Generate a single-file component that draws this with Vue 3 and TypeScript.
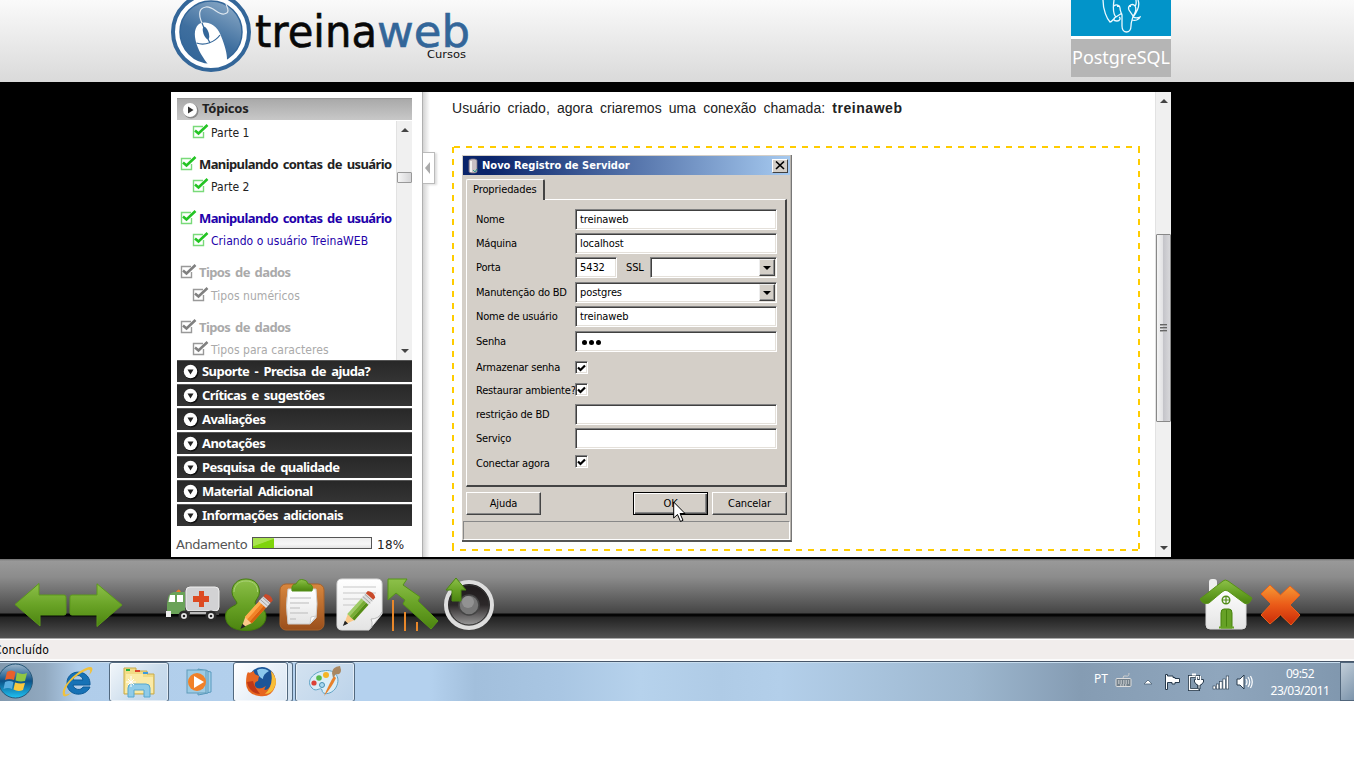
<script setup lang="ts">
interface Topic { label: string; kind: 'head' | 'sub'; state: 'done' | 'current' | 'todo'; h: number }

const topics: Topic[] = [
  { label: 'Parte 1', kind: 'sub', state: 'done', h: 32 },
  { label: 'Manipulando contas de usuário', kind: 'head', state: 'done', h: 22 },
  { label: 'Parte 2', kind: 'sub', state: 'done', h: 32 },
  { label: 'Manipulando contas de usuário', kind: 'head', state: 'current', h: 22 },
  { label: 'Criando o usuário TreinaWEB', kind: 'sub', state: 'current', h: 32 },
  { label: 'Tipos de dados', kind: 'head', state: 'todo', h: 23 },
  { label: 'Tipos numéricos', kind: 'sub', state: 'todo', h: 32 },
  { label: 'Tipos de dados', kind: 'head', state: 'todo', h: 22 },
  { label: 'Tipos para caracteres', kind: 'sub', state: 'todo', h: 30 },
]

const sections: string[] = [
  'Suporte - Precisa de ajuda?',
  'Críticas e sugestões',
  'Avaliações',
  'Anotações',
  'Pesquisa de qualidade',
  'Material Adicional',
  'Informações adicionais',
]

interface Field { label: string; type: 'text' | 'port' | 'select' | 'check' | 'password'; value?: string; h: number }

const fields: Field[] = [
  { label: 'Nome', type: 'text', value: 'treinaweb', h: 24 },
  { label: 'Máquina', type: 'text', value: 'localhost', h: 24 },
  { label: 'Porta', type: 'port', value: '5432', h: 25 },
  { label: 'Manutenção do BD', type: 'select', value: 'postgres', h: 24 },
  { label: 'Nome de usuário', type: 'text', value: 'treinaweb', h: 25 },
  { label: 'Senha', type: 'password', h: 26 },
  { label: 'Armazenar senha', type: 'check', h: 23 },
  { label: 'Restaurar ambiente?', type: 'check', h: 24 },
  { label: 'restrição de BD', type: 'text', h: 24 },
  { label: 'Serviço', type: 'text', h: 24 },
  { label: 'Conectar agora', type: 'check', h: 24 },
]

const progress = 18
</script>

<template>
  <div class="screen">
    <header class="top">
      <svg class="logo" width="300" height="82" viewBox="0 0 300 82">
        <defs>
          <linearGradient id="disc" x1="0.8" y1="0" x2="0.3" y2="1">
            <stop offset="0" stop-color="#8aa9c6" /><stop offset="0.6" stop-color="#3f6f9f" /><stop offset="1" stop-color="#336699" />
          </linearGradient>
        </defs>
        <circle cx="40" cy="32" r="38" fill="#fff" stroke="#336699" stroke-width="4" />
        <circle cx="40" cy="32" r="31" fill="url(#disc)" stroke="#336699" stroke-width="1.5" />
        <path d="M31 23C27 14 28 8 35 7S47 15 53 14S57 9 55 4" fill="none" stroke="#dfe8f0" stroke-width="1.2" />
        <path d="M24 37C23 28 27 22 34 22.500C43 23 48 30 50 36C54 46 56 53 56 60C53 64 49 66 44 67C40 67 37 65 36 63C30 55 25 46 24 37Z" fill="#fff" />
        <path d="M25.500 43C34 46 44 42 49 35M39 43L36.500 38M31 23L33 28" fill="none" stroke="#336699" stroke-width="1.200" />
        <ellipse cx="35" cy="33" rx="2.600" ry="6.500" transform="rotate(-20 35 33)" fill="#336699" />
        <text x="84" y="46.500" class="brand" textLength="122" lengthAdjust="spacingAndGlyphs">treina</text>
        <text x="206" y="46.500" class="brand blue" textLength="93" lengthAdjust="spacingAndGlyphs">web</text>
        <text x="256" y="58" class="brand-sub" textLength="39" lengthAdjust="spacingAndGlyphs">Cursos</text>
      </svg>
      <div class="course">
        <div class="course-pic">
          <svg width="100" height="36" viewBox="0 0 100 36" fill="none" stroke="#eefaff" stroke-width="1.3">
            <path d="M32 0C32 10 36 19 39 22C41 22 42 19 44 18M43 0C42 7 42 14 45 17L51 13M43 6C45 4 49 5 49 8S50 12 51 15V26C51 34 60 34 60 26C60 21 62 18 62 16L58 10C56 5 62 3 64 6C66 9 64 14 62 16M64 6C66 4 65 2 65 0M67 0C69 5 66 12 62 17C64 18 67 18 69 17C68 20 64 21 61 20M45 17C42 18 42 21 46 21C49 21 50 18 48 17" />
            <path d="M46 6h2M58 6h2" stroke-width="2" />
          </svg>
        </div>
        <div class="course-name">PostgreSQL</div>
      </div>
    </header>

    <div class="stage">
      <div class="book">
        <aside class="side">
          <div class="side-head">
            <svg width="17" height="17" viewBox="0 0 17 17"><circle cx="9" cy="9" r="7.500" fill="#666" opacity=".6" /><circle cx="8" cy="8" r="7" fill="#fff" /><path d="M6 4.500L11.500 8L6 11.500Z" fill="#333" /></svg>
            <span>Tópicos</span>
          </div>
          <div class="tree">
            <ul class="topics">
              <li v-for="(t, i) in topics" :key="i" :class="[t.kind, t.state]" :style="{ height: t.h + 'px' }">
                <svg class="tick" width="17" height="15" viewBox="0 0 17 15">
                  <path d="M11 2.500H1.500V13.500H11.500V8" fill="none" class="tick-box" />
                  <path d="M3 6.500L6.500 9.500L15.500 1" fill="none" class="tick-mark" />
                </svg>
                <span>{{ t.label }}</span>
              </li>
            </ul>
            <div class="bar mini">
              <i class="tri up"></i>
              <div class="mini-thumb"></div>
              <i class="tri down"></i>
            </div>
          </div>
          <ul class="sections">
            <li v-for="s in sections" :key="s">
              <svg width="16" height="16" viewBox="0 0 16 16"><circle cx="8.500" cy="8.500" r="7" fill="#111" /><circle cx="7.500" cy="7.500" r="6.700" fill="#fff" /><path d="M4.500 5.500H10.500L7.500 10.500Z" fill="#222" /></svg>
              <span>{{ s }}</span>
            </li>
          </ul>
          <div class="progress">
            <span class="p-label">Andamento</span>
            <div class="meter"><div class="fill" :style="{ width: progress + '%' }"></div></div>
            <span class="p-value">{{ progress }}%</span>
          </div>
        </aside>

        <div class="gutter">
          <div class="handle"><i></i></div>
        </div>

        <main class="lesson">
          <p>Usuário criado, agora criaremos uma conexão chamada: <b>treinaweb</b></p>
          <div class="frame">
            <section class="dialog">
              <div class="titlebar">
                <svg width="14" height="16" viewBox="0 0 14 16"><path d="M3 2.500C3 .5 11 .5 11 2.500V13.500C11 15.500 3 15.500 3 13.500Z" fill="#c9bfc4" stroke="#7d7686" stroke-width=".8" /><path d="M5 3V14" stroke="#fff" stroke-width="1.500" /><path d="M7 12L9 14L11 11" stroke="#2a9a8a" fill="none" /></svg>
                <span>Novo Registro de Servidor</span>
                <div class="close"><svg width="10" height="9" viewBox="0 0 10 9"><path d="M1 .5L9 8M9 .5L1 8" stroke="#000" stroke-width="1.600" /></svg></div>
              </div>
              <div class="tab">Propriedades</div>
              <div class="sheet">
                <div v-for="f in fields" :key="f.label" class="row" :class="f.type" :style="{ height: f.h + 'px' }">
                  <label>{{ f.label }}</label>
                  <template v-if="f.type === 'check'">
                    <div class="box"><svg width="9" height="9" viewBox="0 0 9 9"><path d="M1 3.500L3.500 6L8 1.500" fill="none" stroke="#000" stroke-width="2.200" /></svg></div>
                  </template>
                  <template v-else-if="f.type === 'port'">
                    <div class="input short">{{ f.value }}</div>
                    <span class="ssl">SSL</span>
                    <div class="input combo"><span></span><b class="drop"><i></i></b></div>
                  </template>
                  <div v-else-if="f.type === 'select'" class="input"><span>{{ f.value }}</span><b class="drop"><i></i></b></div>
                  <div v-else-if="f.type === 'password'" class="input dots"><i></i><i></i><i></i></div>
                  <div v-else class="input">{{ f.value }}</div>
                </div>
              </div>
              <div class="buttons">
                <div class="btn">Ajuda</div>
                <div class="btn ok">OK</div>
                <div class="btn">Cancelar</div>
                <svg class="cursor" width="13" height="22" viewBox="0 0 13 22"><path d="M.7 1V17L4.500 13.500L7.500 20.500L10 19.300L7 12.500H12Z" fill="#fff" stroke="#000" stroke-width="1" /></svg>
              </div>
              <div class="status-cell"></div>
            </section>
          </div>
        </main>

        <div class="bar main-bar">
          <i class="tri up"></i>
          <div class="thumb"><i></i><i></i><i></i></div>
          <i class="tri down"></i>
        </div>
      </div>
    </div>

    <nav class="tools">
      <svg width="0" height="0" class="defs">
        <defs>
          <linearGradient id="leaf" x1="0" y1="0" x2="0" y2="1"><stop offset="0" stop-color="#8dc04a" /><stop offset=".5" stop-color="#69a326" /><stop offset="1" stop-color="#4c8410" /></linearGradient>
          <linearGradient id="wood" x1="0" y1="0" x2="0" y2="1"><stop offset="0" stop-color="#d8873e" /><stop offset="1" stop-color="#9a4f1c" /></linearGradient>
          <linearGradient id="fire" x1="0" y1="0" x2="0" y2="1"><stop offset="0" stop-color="#f79a35" /><stop offset=".5" stop-color="#ea5a18" /><stop offset="1" stop-color="#c92a08" /></linearGradient>
          <linearGradient id="paper" x1="0" y1="0" x2="0" y2="1"><stop offset="0" stop-color="#fff" /><stop offset="1" stop-color="#e4e4e4" /></linearGradient>
          <linearGradient id="coal" x1="0" y1="0" x2="0" y2="1"><stop offset="0" stop-color="#1c1819" /><stop offset=".5" stop-color="#2c2829" /><stop offset="1" stop-color="#aaa" /></linearGradient>
          <g id="pencil">
            <path d="M-4.500 -15H4.500V8L0 19L-4.500 8Z" fill="#fbc98a" />
            <path d="M-4.800 -14H-1.600V8.500H-4.800Z" fill="var(--lite)" /><path d="M-1.600 -14H1.600V8.500H-1.600Z" fill="var(--mid)" /><path d="M1.600 -14H4.800V8.500H1.600Z" fill="var(--deep)" />
            <path d="M-1.400 15.500L0 19L1.400 15.500Z" fill="#222" stroke="#222" />
            <path d="M-5 -19.500H5V-12.500H-5Z" fill="#ddd" /><path d="M-5 -18H5M-5 -15H5" stroke="#999" stroke-width=".8" />
            <path d="M-5 -19.500V-22.500Q0 -26 5 -22.500V-19.500Z" fill="#c94a2a" />
          </g>
        </defs>
      </svg>
      <svg class="t-back" width="54" height="46" viewBox="0 0 54 46"><path d="M1 22.500L25 1.500V13H50Q52 13 52 15V31Q52 33 50 33H26V44Z" fill="url(#leaf)" stroke="#5c9a1b" /></svg>
      <svg class="t-next" width="54" height="46" viewBox="0 0 54 46"><path d="M53 22L28 .8V12H3Q1 12 1 14V30Q1 32 3 32H28V43.500Z" fill="url(#leaf)" stroke="#5c9a1b" /></svg>
      <svg class="t-help" width="54" height="36" viewBox="0 0 54 36">
        <rect x="20" y="1" width="33" height="24" rx="4" fill="#d2d2d4" stroke="#eee" />
        <path d="M2 12Q3 7 8 6H19V28H1V18Z" fill="#6aa258" /><path d="M4 9H9V16H2.500ZM11 9H17V16H11Z" fill="#fff" /><path d="M10 6Q13 1 15 6Z" fill="#ee7a28" />
        <path d="M0 25H5V31H0Z" fill="#eee" /><path d="M20 25H53V29H20Z" fill="#444" /><path d="M24 27H40" stroke="#bbb" stroke-width="2" />
        <path d="M33 5H38V10H43V16H38V21H33V16H27V10H33Z" fill="#dd4a21" />
        <g fill="#999" stroke="#2a2a2a" stroke-width="2.500"><circle cx="18" cy="30" r="4.300" /><circle cx="45" cy="30" r="4.300" /></g>
        <g fill="#222" stroke="#eee" stroke-width="1.300"><circle cx="18" cy="30" r="2" /><circle cx="45" cy="30" r="2" /></g>
      </svg>
      <svg class="t-user" width="50" height="54" viewBox="0 0 50 54">
        <path d="M21 1C30 1 34.500 7 34.500 14C34.500 19 30 22 30 25C30 28 41 29 41 38C41 48 32 52.500 21 52.500C9 52.500 .5 48 .5 38C.5 29 12 28 12 25C11 22 7 19 7 14C7 7 12 1 21 1Z" fill="url(#leaf)" stroke="#427b0d" />
        <path d="M9 14C9 8 13 3 21 3S33 8 32.500 14" fill="none" stroke="#a8d074" />
        <use href="#pencil" class="orange" transform="translate(29 36) rotate(42)" />
      </svg>
      <svg class="t-clip" width="46" height="54" viewBox="0 0 46 54">
        <rect x="1" y="6" width="44" height="46" rx="6" fill="url(#wood)" stroke="#a96228" />
        <path d="M9 11H37Q39 26 37 40L31 46H9Q6 28 9 11Z" fill="url(#paper)" stroke="#ccc" /><path d="M31 46L32 39L37 38Z" fill="#fff" stroke="#ccc" />
        <path d="M11 20H32M11 25H30M11 30H21M11 35H29M11 41H17" stroke="#bbb" />
        <path d="M13 13Q12 6 17 6Q20 0 25 2Q28 2 29 6Q35 6 33 13Z" fill="url(#leaf)" stroke="#529016" />
      </svg>
      <svg class="t-note" width="48" height="54" viewBox="0 0 48 54">
        <path d="M6 1H41Q46 1 46 6V36L33 52H6Q1 52 1 47V6Q1 1 6 1Z" fill="url(#paper)" stroke="#ddd" />
        <path d="M33 52Q38 48 35 41Q43 41 46 34" fill="#f5f5f5" stroke="#bbb" />
        <path d="M7 9H40M7 15H40M7 21H26M7 27H24" stroke="#c7c7c7" />
        <use href="#pencil" class="green" transform="translate(20.500 33) rotate(42)" />
      </svg>
      <svg class="t-chart" width="52" height="54" viewBox="0 0 52 54">
        <path d="M6 22V53M18 34V53M30 44V53" stroke="#e8872a" stroke-width="2" />
        <path d="M1 1H20L16 7L33 19L31 23L51 43L44 51L16 26L18 22L9 15L1 22Z" fill="url(#leaf)" stroke="#559418" />
      </svg>
      <svg class="t-sound" width="52" height="54" viewBox="0 0 52 54">
        <circle cx="26" cy="28" r="23" fill="url(#coal)" stroke="#dedede" stroke-width="4" /><circle cx="26" cy="28" r="20" fill="none" stroke="#333" />
        <circle cx="26" cy="28" r="10" fill="#777" stroke="#444" stroke-width="1.500" /><circle cx="25" cy="25" r="6" fill="#929292" />
        <path d="M13 1L23 13H18V24H9V13H3Z" fill="url(#leaf)" stroke="#4b8712" />
      </svg>
      <svg class="t-home" width="54" height="54" viewBox="0 0 54 54">
        <rect x="10" y="1" width="8" height="20" rx="3" fill="#eee" />
        <path d="M7 24L27 9L47 24V47Q47 51 43 51H11Q7 51 7 47Z" fill="url(#paper)" stroke="#ddd" />
        <path d="M1 21L24 3Q26 1 29 3L53 20Q50 28 45 25L29 13Q26 11 23 14L10 25Q4 27 1 21Z" fill="url(#leaf)" stroke="#589316" />
        <circle cx="27" cy="22" r="3.800" fill="none" stroke="#508c17" stroke-width="1.400" /><path d="M23 22H31M27 18V26" stroke="#508c17" stroke-width="1.200" />
        <path d="M22 50V35Q22 31 25 31H30Q33 31 33 35V50Z" fill="#66a126" stroke="#46820d" /><path d="M27.500 32V49" stroke="#46820d" /><path d="M20 49.500H35" stroke="#65a323" stroke-width="2" />
      </svg>
      <svg class="t-exit" width="41" height="42" viewBox="0 0 41 42"><path d="M10 1L20.500 11L30 2L40 11L30 21L40 31L31 41L20.500 31L10 40L1 31L11 20L1 10Z" fill="url(#fire)" stroke="#e9601b" stroke-linejoin="round" /></svg>
    </nav>

    <div class="statusbar"><span>Concluído</span></div>

    <footer class="taskbar">
      <div class="start">
        <svg width="36" height="38" viewBox="0 0 36 38">
          <defs><linearGradient id="orb" x1="0" y1="0" x2="0" y2="1"><stop offset="0" stop-color="#9fb7cb" /><stop offset=".5" stop-color="#0c5288" /><stop offset="1" stop-color="#1fc3f3" /></linearGradient></defs>
          <circle cx="15.500" cy="19" r="17" fill="url(#orb)" stroke="#275879" />
          <path d="M7 10Q11 7 15.500 10L14 18Q9 16 5 18Z" fill="#e8602c" /><path d="M17 10.500Q22 13 27 11L25 19Q20 20 15.500 18.500Z" fill="#8fc643" />
          <path d="M5 20Q9 18 13.500 20L12 27Q8 25 3.500 27Z" fill="#58acdf" /><path d="M15 20.500Q20 22 25 21L23 28Q18 30 13.500 27.500Z" fill="#fac83c" />
        </svg>
      </div>
      <div class="app ie">
        <svg width="32" height="32" viewBox="0 0 32 32">
          <path d="M28 19H11C12 24 19 25 21 21H28C24 31 6 31 5 18C4 2 29 2 28 19ZM11 14H21C20 8 12 8 11 14Z" fill="#1772b6" stroke="#0d5b98" fill-rule="evenodd" />
          <path d="M1 29C-2 20 18 2 28 1C33 1 29 8 27 9C29 5 29 2 23 5C12 10 2 21 3 27C3 30 7 28 10 26C6 30 2 32 1 29Z" fill="#f1c13b" />
        </svg>
      </div>
      <div class="app lit folder">
        <svg width="34" height="32" viewBox="0 0 34 32">
          <path d="M2 7V2H14V5H25V8H32V28H2Z" fill="#f2dc85" stroke="#c8aa4a" /><path d="M4 8H21V11H31V27H3Z" fill="#faeaa7" />
          <path d="M4 4H8" stroke="#22b33d" stroke-width="2" /><path d="M13 5H18" stroke="#d9452c" stroke-width="2" /><path d="M21 7H26" stroke="#3e9bdc" stroke-width="2" />
          <path d="M6 31V22Q6 18 10 18H24Q28 18 28 22V31H22V24H12V31Z" fill="#8fcbe8" stroke="#57a7cf" /><path d="M9 10V21M4 16H14M6 13L12 19M12 13L6 19" stroke="#fff" />
        </svg>
      </div>
      <div class="app wmp">
        <svg width="30" height="28" viewBox="0 0 30 28">
          <path d="M15 2L25 4V24L15 26Z" fill="#a4d0e7" stroke="#5799bd" /><path d="M12 1L22 3V25L12 27Z" fill="#a4d0e7" stroke="#5799bd" /><rect x="1" y="2" width="19" height="23" fill="#9ccbe4" stroke="#619bb9" />
          <circle cx="11" cy="14" r="9" fill="#f18129" /><path d="M8 8L18 14L8 20Z" fill="#fff" />
        </svg>
      </div>
      <div class="app lit firefox">
        <svg width="32" height="32" viewBox="0 0 32 32">
          <circle cx="17" cy="14" r="13" fill="#1b5598" /><path d="M12 4Q18 1 24 5Q18 8 18 13Q13 11 12 4Z" fill="#8bc9ed" />
          <path d="M3 6Q4 8 9 5Q8 8 14 10L13 15Q9 16 10 20Q13 25 21 20Q17 26 23 23Q29 17 26 5Q33 12 30 21Q26 32 14 30Q1 28 1 17Q1 9 3 6Z" fill="#e66521" /><path d="M26 5Q33 13 30 20Q27 28 20 28Q29 20 26 5Z" fill="#f8bf38" /><path d="M2 16Q4 27 15 28Q9 21 8 15Z" fill="#bf3816" />
        </svg>
      </div>
      <div class="stack"></div>
      <div class="app lit paint">
        <svg width="34" height="34" viewBox="0 0 34 34">
          <path d="M15 6C28 3 34 14 27 24C22 30 14 30 14 25C13 21 8 28 4 23C-3 16 6 7 15 6Z" fill="#d9edf7" stroke="#5fa3c6" />
          <circle cx="6" cy="18" r="2.600" fill="#dc4136" /><circle cx="11" cy="13" r="2.800" fill="#59b94b" /><circle cx="18" cy="10" r="3" fill="#f5b527" /><circle cx="14" cy="20" r="2.500" fill="#a8d8ef" stroke="#478eb1" />
          <path d="M16 31Q22 17 26 11L28 13Q24 22 16 31Z" fill="#e8812b" /><path d="M24 8Q24 2 32 1L33 5Q33 10 28 9L25 13Z" fill="#a98761" />
        </svg>
      </div>
      <div class="tray">
        <span class="lang">PT</span>
        <svg class="kbd" width="17" height="14" viewBox="0 0 17 14"><rect x="1" y="5.500" width="15" height="8" rx="1" fill="#74818b" stroke="#ddd" /><path d="M3 8H14M3 10H14M5 12H12" stroke="#eee" stroke-dasharray="1.500 1" /><path d="M8 5Q8 2 11 3T14 0" stroke="#ccc" fill="none" /></svg>
        <svg class="caret" width="10" height="6" viewBox="0 0 10 6"><path d="M1 5L5 1L9 5Z" fill="#fff" stroke="#4c6276" stroke-width=".8" /></svg>
        <svg class="flag" width="18" height="18" viewBox="0 0 18 18"><path d="M1.500 1.500V16.500H3.500V9.500H8V11H11V9.500H15.500V5.500H11V4.500H9V3H3.500V1.500Z" fill="#fff" stroke="#273a4c" /></svg>
        <svg class="plug" width="16" height="18" viewBox="0 0 16 18"><rect x="1.500" y="3.500" width="9" height="13" fill="#8399ae" stroke="#273a4c" stroke-width="3" /><rect x="1.500" y="3.500" width="9" height="13" fill="none" stroke="#fff" stroke-width="1.300" /><path d="M4 1.500H8" stroke="#fff" stroke-width="2" /><path d="M6.500 6.500H15.500V9L13 12H12V16H10V12H9L6.500 9ZM8 3V6M13 3V6" fill="#fff" stroke="#273a4c" /><path d="M8.500 3V7M12.500 3V7" stroke="#fff" stroke-width="1.400" /></svg>
        <svg class="net" width="18" height="15" viewBox="0 0 18 15"><g fill="#fff" stroke="#273a4c" stroke-width=".6"><rect x="1" y="11" width="2.500" height="3" /><rect x="4.300" y="9" width="2.500" height="5" /><rect x="7.600" y="6.500" width="2.500" height="7.500" /><rect x="10.900" y="4" width="2.500" height="10" /><rect x="14.200" y="1" width="2.500" height="13" /></g></svg>
        <svg class="vol" width="18" height="16" viewBox="0 0 18 16"><path d="M1 5H4L8 1V15L4 11H1Z" fill="#fff" stroke="#273a4c" /><path d="M10 5Q12 8 10 11M12 3Q15.500 8 12 13M14.500 2Q18 8 14.500 14" fill="none" stroke="#fff" stroke-width="1.200" /></svg>
        <div class="clock"><span>09:52</span><span>23/03/2011</span></div>
      </div>
      <div class="peek"></div>
    </footer>
  </div>
</template>

<style>
html, body { margin: 0; background: #fff; overflow: hidden; }
</style>

<style scoped>
* { box-sizing: border-box; }
ul, p { margin: 0; padding: 0; list-style: none; }
svg { display: block; flex: none; }
.screen { width: 1354px; height: 701px; overflow: hidden; background: #000; font-family: "DejaVu Sans Condensed", "DejaVu Sans", sans-serif; font-size: 12px; color: #222; }

.top { height: 82px; background: linear-gradient(#fafafa, #ddd 90%, #dadada); display: flex; padding-left: 171px; }
.brand { font: 45px "DejaVu Sans", sans-serif; fill: #080808; stroke: #080808; stroke-width: .6; }
.brand.blue { fill: #336699; stroke: #336699; }
.brand-sub { font: 10px "DejaVu Sans", sans-serif; fill: #111; }
.course { width: 100px; margin-left: 600px; }
.course-pic { height: 39px; background: #0294c9; border-bottom: 3px solid #fff; }
.course-name { height: 38px; background: #b5b5b5; color: #fff; font: 18px/37px "Noto Sans", sans-serif; letter-spacing: -.08px; text-align: center; white-space: nowrap; }

.stage { height: 477px; padding: 10px 0 0 171px; }
.book { width: 1000px; height: 465px; background: #fff; display: flex; }
.side { width: 251px; padding: 6px 0 0 6px; }
.side-head { width: 235px; height: 22px; border-top: 1px solid #999; background: linear-gradient(#a9a9a9, #c8c8c8); display: flex; align-items: center; padding-left: 5px; gap: 3px; font: bold 13px/19px "Noto Sans", sans-serif; letter-spacing: -.25px; color: #222; }
.side-head svg { margin-top: 2px; }
.side-head span { margin-top: -2px; }
.tree { width: 235px; height: 240px; display: flex; overflow: hidden; padding-top: 1px; }
.topics { width: 220px; overflow: hidden; }
.topics li { display: flex; align-items: flex-start; white-space: nowrap; line-height: 22px; }
.topics .head { padding-left: 3px; gap: 2px; font: bold 13px/22px "Noto Sans", sans-serif; letter-spacing: -.6px; word-spacing: 2px; }
.topics .sub { padding-left: 15px; gap: 2px; font-size: 12px; line-height: 24px; letter-spacing: .05px; }
.tick { margin-top: 3px; }
.tick-box { stroke: #79da79; stroke-width: 1.4; }
.tick-mark { stroke: #24c424; stroke-width: 2.6; }
.current { color: #2200aa; }
.todo { color: #aaa; }
.todo .tick-box { stroke: #999; }
.todo .tick-mark { stroke: #808080; }
.bar { background: #f0f0f0; border-left: 1px solid #e2e2e2; display: flex; flex-direction: column; align-items: center; }
.tri { width: 0; height: 0; border: 4px solid transparent; }
.tri.up { border-bottom-color: #444; border-top: 0; }
.tri.down { border-top-color: #444; border-bottom: 0; margin-top: auto; }
.mini { width: 16px; padding: 7px 0; }
.mini-thumb { width: 15px; height: 11px; margin-top: 40px; border: 1px solid #999; border-radius: 1px; background: linear-gradient(90deg, #f5f5f5, #d5d5d7); }
.sections { width: 235px; }
.sections li { height: 22px; margin-bottom: 2px; border-top: 1px solid #555; background: linear-gradient(#282828, #343434); display: flex; align-items: center; padding-left: 6px; gap: 3px; color: #fff; font: bold 13px/21px "Noto Sans", sans-serif; letter-spacing: -.55px; word-spacing: 2.4px; }
.progress { display: flex; align-items: center; height: 33px; margin-left: -1px; font-family: "DejaVu Sans", sans-serif; font-size: 13px; }
.p-label { width: 76px; color: #555; letter-spacing: -.45px; }
.meter { width: 120px; height: 12px; border: 1px solid #555; background: linear-gradient(#ededed, #f7f7f7 60%, #e3e3e3); margin: -3px 5px 0 0; }
.fill { height: 10px; background: linear-gradient(160deg, #a8e34e 45%, #7fd40b 50%); }
.p-value { font-size: 12px; color: #222; letter-spacing: .3px; }

.gutter { width: 30px; border-left: 1px solid #b0b0b0; background: linear-gradient(90deg, #d3d3d3, #fff 7px); padding-top: 60px; }
.handle { width: 12px; height: 32px; border: 1px solid #bbb; border-left: 0; background: #fff; display: flex; align-items: center; justify-content: center; box-shadow: 2px 1px 2px #ddd; }
.handle i { border: 6px solid transparent; border-right: 5px solid #aaa; border-left: 0; margin-right: 3px; }

.lesson { width: 703px; padding-top: 6px; }
.lesson p { font: 14px/20px "Liberation Sans", Arial, sans-serif; word-spacing: 3.1px; letter-spacing: .04px; color: #222; }
.lesson b { letter-spacing: .55px; }
.frame {
  width: 688px; height: 405px; margin-top: 28px; padding: 9px 0 0 10px;
  background:
    repeating-linear-gradient(90deg, transparent 0 2px, #fc0 2px 8px, transparent 8px 12px) 0 0 / 100% 2px no-repeat,
    repeating-linear-gradient(90deg, #fc0 0 2px, transparent 2px 8px, #fc0 8px 12px) 0 100% / 100% 2px no-repeat,
    repeating-linear-gradient(180deg, transparent 0 1px, #fc0 1px 7px, transparent 7px 12px) 0 0 / 2px 100% no-repeat,
    repeating-linear-gradient(180deg, transparent 0 1px, #fc0 1px 7px, transparent 7px 12px) 100% 0 / 2px 100% no-repeat;
}
.dialog { width: 330px; height: 387px; background: #d4cfc8; border-right: 1px solid #777; border-bottom: 2px solid #555; box-shadow: inset -1px 0 #b9b5af; padding: 1px 1px 0 1px; color: #000; font-size: 11px; letter-spacing: -.1px; }
.titlebar { height: 19px; width: 327px; background: linear-gradient(90deg, #0a246a 8%, #a6caf0); display: flex; align-items: center; padding: 0 2px 0 3px; gap: 2px; color: #fff; font: bold 11px/20px "DejaVu Sans Condensed", sans-serif; letter-spacing: .03px; }
.titlebar span { padding-top: 1px; }
.close { width: 16px; height: 14px; margin-left: auto; background: #d4cfc8; border: 1px solid; border-color: #fff #404040 #404040 #fff; display: flex; align-items: center; justify-content: center; }
.tab { width: 79px; height: 21px; margin: 4px 0 -1px 3px; border: 1px solid #fff; border-bottom: 0; border-right: 2px solid #444; border-radius: 2px 2px 0 0; line-height: 19px; padding-left: 6px; white-space: nowrap; background: #d4cfc8; position: relative; }
.sheet { width: 321px; height: 288px; margin-left: 3px; border: 1px solid #fff; border-right: 2px solid #444; border-bottom: 2px solid #444; padding: 9px 0 0 9px; }
.row { display: flex; align-items: flex-start; }
.row label { width: 99px; flex: none; line-height: 22px; white-space: nowrap; letter-spacing: -.2px; }
.input { width: 202px; height: 21px; border: 1px solid; border-color: #808080 #fff #fff #808080; background: #fff; line-height: 19px; padding-left: 4px; display: flex; justify-content: space-between; box-shadow: inset 1px 1px #404040, inset -1px -1px #e4e0da; }
.short { width: 42px; }
.ssl { width: 33px; padding-left: 9px; line-height: 22px; }
.combo { width: 127px; }
.drop { width: 16px; height: 17px; margin: 1px 1px 0 0; background: #d4cfc8; border: 1px solid; border-color: #eee #404040 #404040 #eee; box-shadow: inset -1px -1px #909090; display: flex; align-items: center; justify-content: center; }
.drop i { border: 4px solid transparent; border-top-color: #000; border-bottom: 0; }
.dots { gap: 2px; justify-content: flex-start; padding: 8px 0 0 6px; }
.dots i { width: 5px; height: 5px; border-radius: 50%; background: #000; }
.box { width: 13px; height: 13px; margin-top: 4px; background: #fff; border: 1px solid; border-color: #808080 #fff #fff #808080; box-shadow: inset 1px 1px #404040, inset -1px -1px #e4e0da; padding: 2px 0 0 1px; }
.check:nth-child(8) .box { margin-top: 3px; }
.check:nth-child(11) .box { margin-top: 3px; }
.check:nth-child(11) label { line-height: 23px; }
.check .box { display: flex; }
.buttons { display: flex; margin: 5px 0 0 3px; position: relative; }
.btn { flex: none; width: 75px; height: 23px; border: 1px solid; border-color: #fff #444 #444 #fff; box-shadow: inset -1px -1px #888; text-align: center; line-height: 22px; margin-right: 4px; }
.btn:nth-child(3) { margin-right: 0; }
.btn.ok { margin-left: 88px; border: 1px solid #000; box-shadow: inset 1px 1px #fff, inset -1px -1px #555, inset -2px -2px #888; }
.cursor { position: absolute; left: 207px; top: 9px; }
.status-cell { width: 327px; height: 19px; margin-top: 6px; border: 1px solid; border-color: #888 #fff #fff #888; }

.main-bar { width: 16px; margin-left: 0; padding: 7px 0; }
.thumb { width: 15px; height: 188px; margin: 131px 1px 0 0; border: 1px solid #888; border-radius: 1px; background: linear-gradient(90deg, #f4f4f4, #e2e2e4 45%, #c5c5ca 50%, #d7d7da); display: flex; flex-direction: column; align-items: center; justify-content: center; gap: 1px; }
.thumb i { width: 7px; height: 2px; background: #666; border-bottom: 1px solid #aaa; }

.tools { height: 80px; display: flex; align-items: flex-start; border-bottom: 1px solid #aaa; background: linear-gradient(#707070 0, #999 2px, #8c8c8c 18px, #454545 54px, #050505 55px, #050505 57px, #222 58px, #525252 79px); }
.defs { position: absolute; }
.t-back { margin: 23px 0 0 14px; }
.t-next { margin: 24px 0 0 1px; }
.t-help { margin: 27px 0 0 43px; }
.t-user { margin: 19px 0 0 5px; }
.t-clip { margin: 19px 0 0 4px; }
.t-note { margin: 19px 0 0 11px; }
.t-chart { margin: 19px 0 0 3px; }
.t-sound { margin: 18px 0 0 4px; }
.t-home { margin: 19px 0 0 704px; }
.t-exit { margin: 25px 0 0 7px; }
.orange { --lite: #ffac4c; --mid: #f28325; --deep: #d8610e; }
.green { --lite: #9dcc67; --mid: #76ae37; --deep: #548e18; }

.statusbar { height: 22px; background: #f1edec; border-top: 1px solid #fff; border-bottom: 2px solid #fbfbfb; line-height: 21px; color: #000; }
.statusbar span { display: block; margin-left: -6px; letter-spacing: .2px; }

.taskbar {
  height: 40px; border-top: 1px solid #475669; display: flex; align-items: flex-start; box-shadow: inset 0 1px #c7dced;
  background:
    linear-gradient(90deg, #8299ae 0, #91a9c0 45px, #b0cdea 78px, #b4d1ee 355px, #b4d1ee 430px, #a2bfdc 475px, #a9c6e3 560px, #b6d2ec 640px, #afcbe6 720px, #b3cfea 780px, #9db7cf 970px, #859cb3 1080px, #8fa6bd 1220px, #7f96ad 1354px);
}
.start { width: 62px; margin-left: 0; height: 39px; overflow: hidden; }
.app { height: 39px; display: flex; align-items: center; justify-content: center; }
.lit { height: 40px; border: 1px solid #52697f; border-radius: 3px; background: linear-gradient(130deg, #f2f6fa, #cadcec 60%, #c0d6eb); box-shadow: inset 0 0 0 1px #ffffff80; }
.ie { width: 32px; }
.folder { width: 60px; margin-left: 15px; }
.wmp { width: 64px; }
.firefox { width: 55px; background: linear-gradient(130deg, #fff, #e6eef7 60%, #d8e6f4); }
.stack { width: 5px; height: 40px; border: 1px solid #52697f; border-left: 0; border-radius: 0 3px 3px 0; background: #d5e4f2; }
.paint { width: 60px; margin-left: 2px; background: linear-gradient(130deg, #d3e2f0, #bcd3ea); }
.tray { display: flex; margin-left: auto; color: #fff; }
.lang { font: 12px/38px "Noto Sans", sans-serif; width: 21px; height: 38px; margin-top: -2px; }
.kbd { margin-top: 11px; }
.caret { margin: 17px 0 0 11px; }
.flag { margin: 11px 0 0 11px; }
.plug { margin: 11px 0 0 6px; }
.net { margin: 13px 0 0 8px; }
.vol { margin: 12px 0 0 6px; }
.clock { width: 78px; margin: 3px 1px 0 7px; display: flex; flex-direction: column; align-items: center; font: 12px/17px "Noto Sans", sans-serif; letter-spacing: -.5px; }
.peek { width: 14px; height: 39px; border: 1px solid #50657b; border-right: 0; background: linear-gradient(135deg, #c2ced9, #7c94ab); }
</style>
